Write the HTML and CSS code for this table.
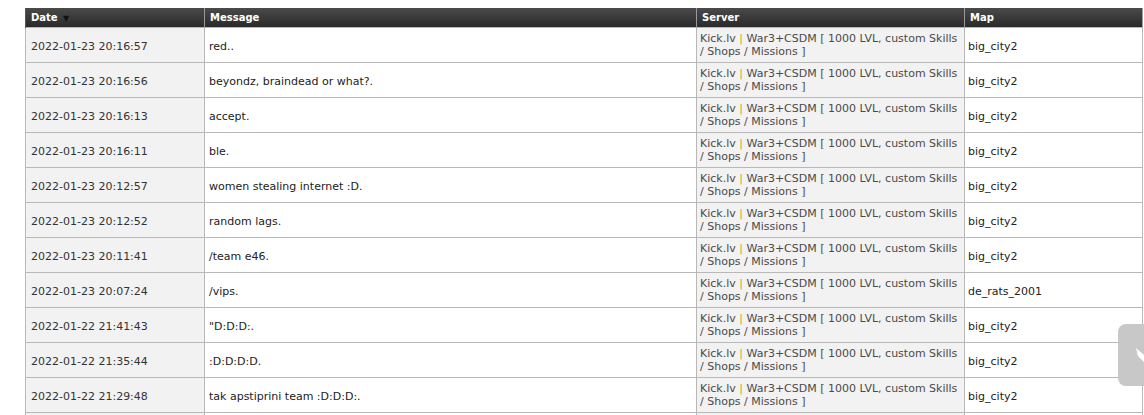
FILE: index.html
```html
<!DOCTYPE html>
<html>
<head>
<meta charset="utf-8">
<link rel="stylesheet" href="styles.css">
</head>
<body>
<table class="log">
  <thead>
    <tr>
      <th class="c-date">Date <span class="sort">&#9660;</span></th>
      <th class="c-msg">Message</th>
      <th class="c-srv">Server</th>
      <th class="c-map">Map</th>
    </tr>
  </thead>
  <tbody>
    <tr><td class="c-date">2022-01-23 20:16:57</td><td class="c-msg">red..</td><td class="c-srv">Kick.lv <span class="pipe">|</span> War3+CSDM [ 1000 LVL, custom Skills / Shops / Missions ]</td><td class="c-map">big_city2</td></tr>
    <tr><td class="c-date">2022-01-23 20:16:56</td><td class="c-msg">beyondz, braindead or what?.</td><td class="c-srv">Kick.lv <span class="pipe">|</span> War3+CSDM [ 1000 LVL, custom Skills / Shops / Missions ]</td><td class="c-map">big_city2</td></tr>
    <tr><td class="c-date">2022-01-23 20:16:13</td><td class="c-msg">accept.</td><td class="c-srv">Kick.lv <span class="pipe">|</span> War3+CSDM [ 1000 LVL, custom Skills / Shops / Missions ]</td><td class="c-map">big_city2</td></tr>
    <tr><td class="c-date">2022-01-23 20:16:11</td><td class="c-msg">ble.</td><td class="c-srv">Kick.lv <span class="pipe">|</span> War3+CSDM [ 1000 LVL, custom Skills / Shops / Missions ]</td><td class="c-map">big_city2</td></tr>
    <tr><td class="c-date">2022-01-23 20:12:57</td><td class="c-msg">women stealing internet :D.</td><td class="c-srv">Kick.lv <span class="pipe">|</span> War3+CSDM [ 1000 LVL, custom Skills / Shops / Missions ]</td><td class="c-map">big_city2</td></tr>
    <tr><td class="c-date">2022-01-23 20:12:52</td><td class="c-msg">random lags.</td><td class="c-srv">Kick.lv <span class="pipe">|</span> War3+CSDM [ 1000 LVL, custom Skills / Shops / Missions ]</td><td class="c-map">big_city2</td></tr>
    <tr><td class="c-date">2022-01-23 20:11:41</td><td class="c-msg">/team e46.</td><td class="c-srv">Kick.lv <span class="pipe">|</span> War3+CSDM [ 1000 LVL, custom Skills / Shops / Missions ]</td><td class="c-map">big_city2</td></tr>
    <tr><td class="c-date">2022-01-23 20:07:24</td><td class="c-msg">/vips.</td><td class="c-srv">Kick.lv <span class="pipe">|</span> War3+CSDM [ 1000 LVL, custom Skills / Shops / Missions ]</td><td class="c-map">de_rats_2001</td></tr>
    <tr><td class="c-date">2022-01-22 21:41:43</td><td class="c-msg">"D:D:D:.</td><td class="c-srv">Kick.lv <span class="pipe">|</span> War3+CSDM [ 1000 LVL, custom Skills / Shops / Missions ]</td><td class="c-map">big_city2</td></tr>
    <tr><td class="c-date">2022-01-22 21:35:44</td><td class="c-msg">:D:D:D:D.</td><td class="c-srv">Kick.lv <span class="pipe">|</span> War3+CSDM [ 1000 LVL, custom Skills / Shops / Missions ]</td><td class="c-map">big_city2</td></tr>
    <tr><td class="c-date">2022-01-22 21:29:48</td><td class="c-msg">tak apstiprini team :D:D:D:.</td><td class="c-srv">Kick.lv <span class="pipe">|</span> War3+CSDM [ 1000 LVL, custom Skills / Shops / Missions ]</td><td class="c-map">big_city2</td></tr>
    <tr><td class="c-date">&nbsp;</td><td class="c-msg">&nbsp;</td><td class="c-srv">&nbsp;</td><td class="c-map">&nbsp;</td></tr>
  </tbody>
</table>
<div class="float-btn">
  <svg width="26" height="62" viewBox="0 0 26 62"><path d="M8 0 H26 V62 H8 A8 8 0 0 1 0 54 V8 A8 8 0 0 1 8 0 Z" fill="#c8c8c8"/><path d="M18 24 L26 31 L26 38 L20 32 Z" fill="#ffffff"/></svg>
</div>
</body>
</html>
```

FILE: styles.css
```css
html, body {
  margin: 0;
  padding: 0;
  background: #ffffff;
  overflow: hidden;
}
body {
  padding: 8px 0 0 25px;
  font-family: "DejaVu Sans", Verdana, sans-serif;
  font-size: 11px;
  color: #222222;
}
.log {
  border-collapse: collapse;
  width: 1117px;
  table-layout: fixed;
  border-right: 1px solid #a0a0a0;
}
.log th {
  height: 19px;
  padding: 0 0 0 5px;
  text-align: left;
  font-size: 10px;
  font-weight: bold;
  color: #ffffff;
  background: linear-gradient(#4a4a4a, #2a2a2a);
  border-left: 1px solid #9a9a9a;
  box-sizing: border-box;
  vertical-align: middle;
}
.log th:first-child { border-left: 1px solid #555; }
.sort {
  font-size: 8px;
  color: #111;
  margin-left: 2px;
}
.log tbody tr { height: 35px; }
.log td {
  height: 30px;
  padding: 3px 4px 0 5px;
  border: 1px solid #b8b8b8;
  vertical-align: middle;
  line-height: 13px;
}
.c-date { width: 179px; }
.c-msg { width: 492px; }
.c-srv { width: 268px; }
.c-map { width: 178px; }
td.c-date { background: #f2f2f2; color: #333; }
td.c-srv { background: #f2f2f2; color: #4a4a4a; padding: 1px 6px 0 3px; }
td.c-msg { color: #222; padding-left: 4px; }
td.c-map { color: #222; padding: 3px 3px 0 3px; }
.pipe { color: #d1a520; }
.float-btn {
  position: absolute;
  left: 1118px;
  top: 324px;
  width: 26px;
  height: 62px;
}
.float-btn svg { display: block; }
```
